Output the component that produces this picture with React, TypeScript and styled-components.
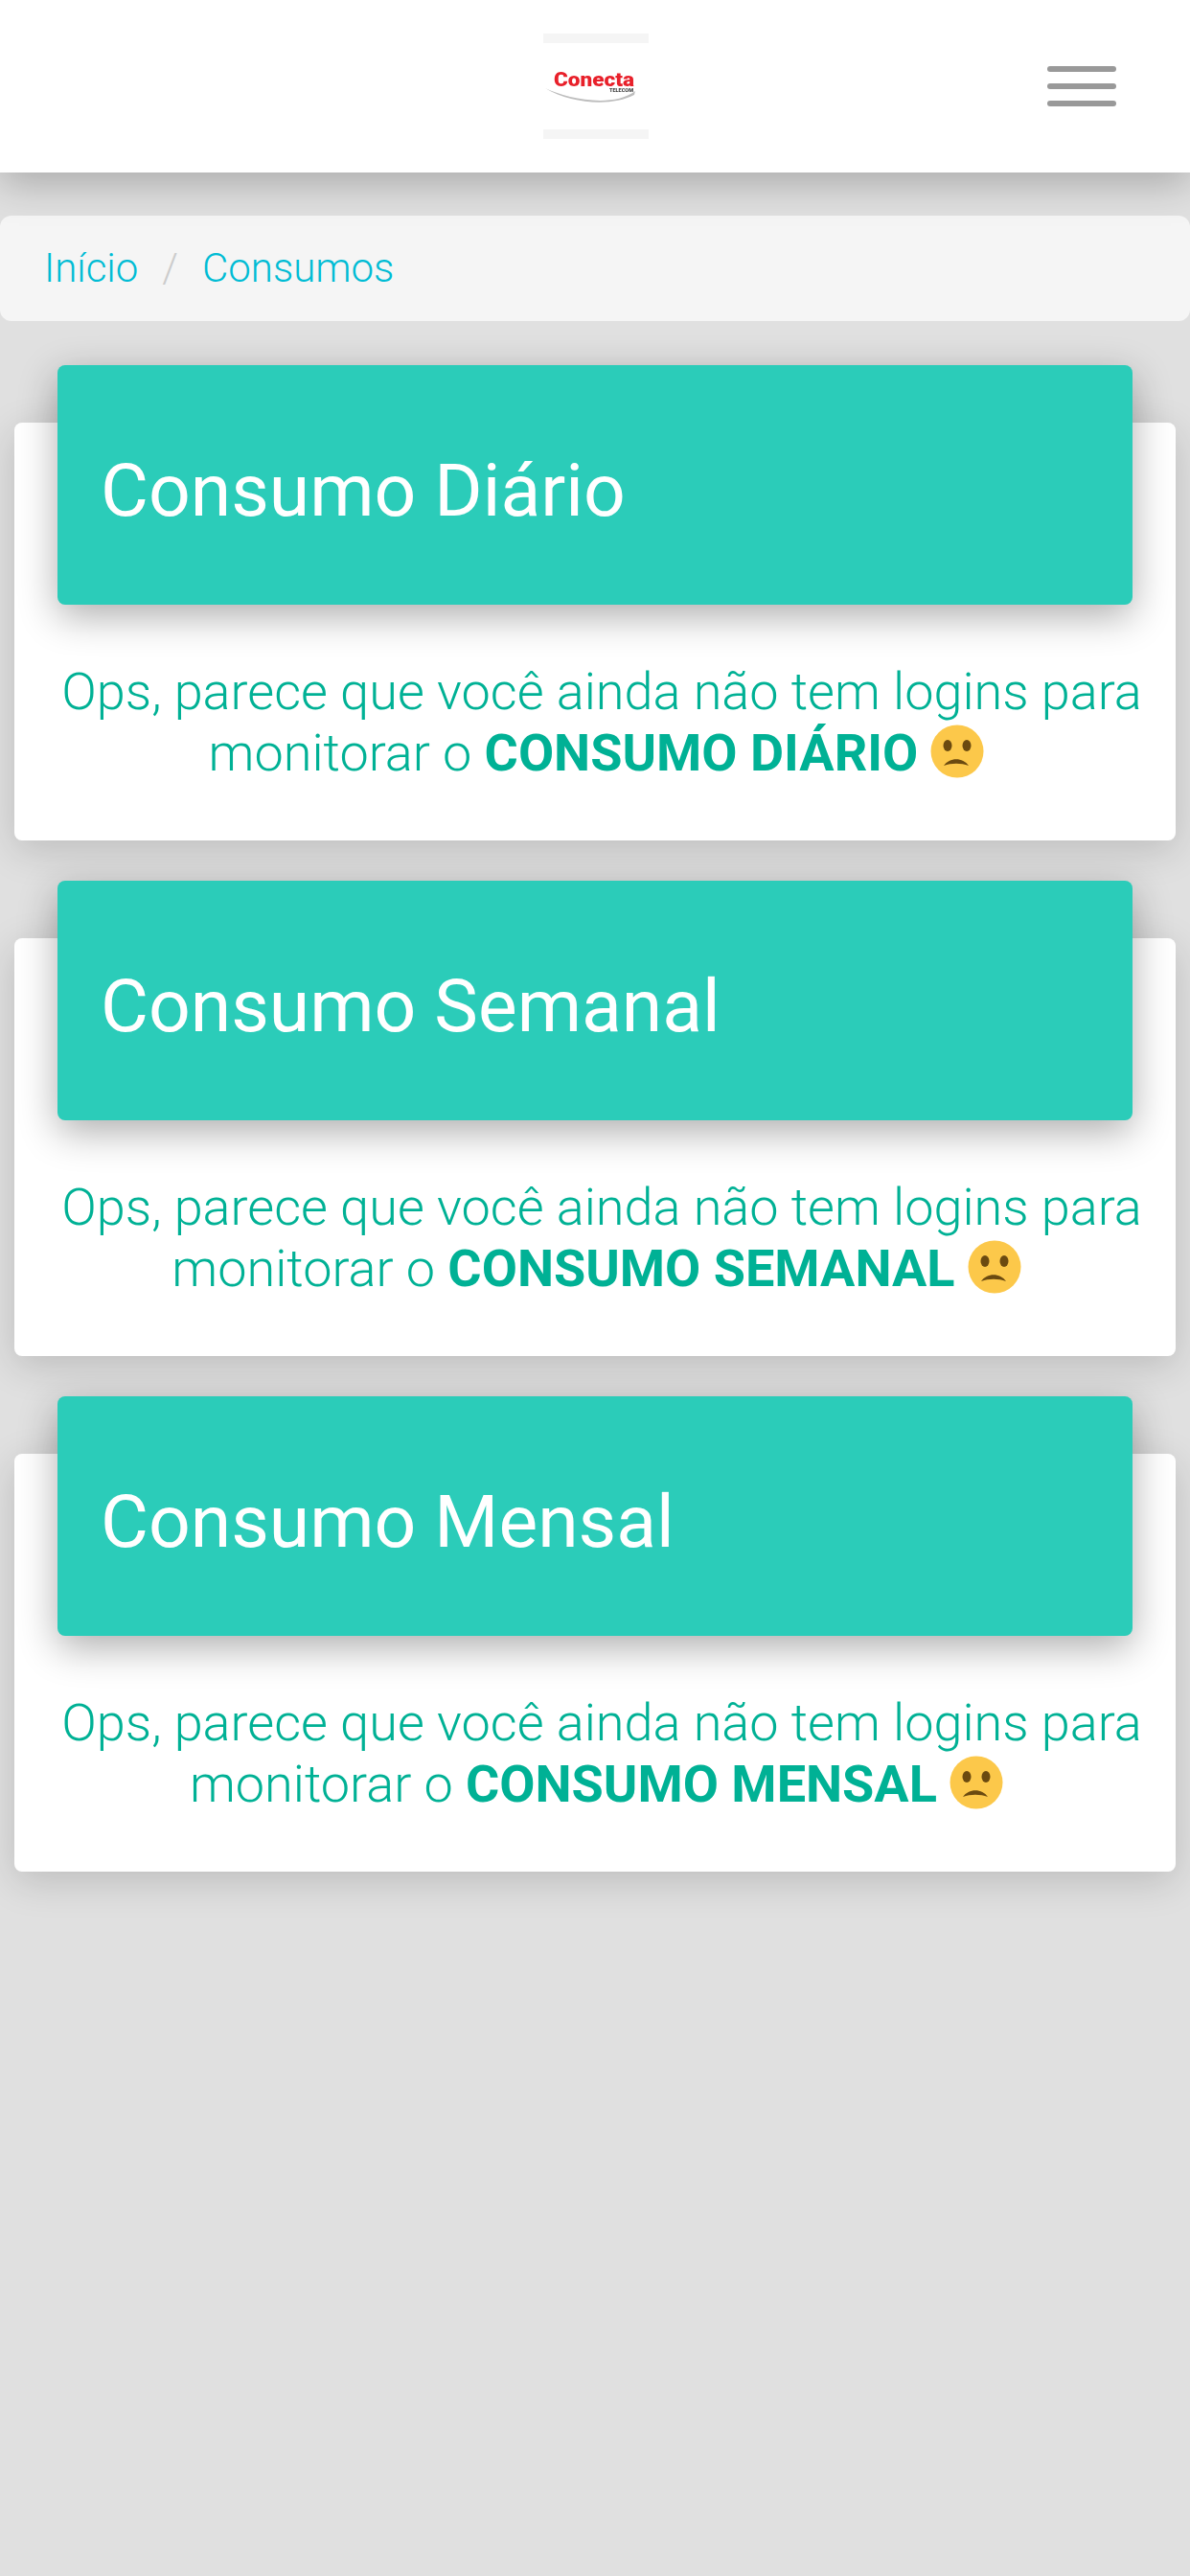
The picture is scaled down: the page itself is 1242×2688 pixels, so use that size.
import styled, { createGlobalStyle } from "styled-components";

const GlobalStyle = createGlobalStyle`
    html, body {
        margin: 0;
        padding: 0;
        background: #e0e0e0;
    }
    body {
        font-family: Roboto, "Liberation Sans", sans-serif;
        font-weight: 300;
    }
`

type ConsumoCardProps = {
    title: string
    label: string
}

const Logo = () => (
    <LogoBox>
        <svg width="110" height="90" viewBox="0 0 110 90">
            <text x="11" y="45" fontFamily="Roboto, sans-serif" fontWeight="900" fontSize="21" textLength="84" lengthAdjust="spacingAndGlyphs" fill="#e8202a">Conecta</text>
            <text x="69" y="50.5" fontFamily="Roboto, sans-serif" fontWeight="900" fontSize="5.5" textLength="25" lengthAdjust="spacingAndGlyphs" fill="#444444">TELECOM</text>
            <path d="M2 47 C 25 58, 72 68, 96 50 L 95 54 C 72 66, 30 64, 2 47 Z" fill="#bdbdbd" />
        </svg>
    </LogoBox>
)

const SadFace = () => (
    <Face width="56" height="56" viewBox="0 0 56 56">
        <circle cx="28" cy="28" r="27.5" fill="#fcc84a" />
        <ellipse cx="18" cy="22" rx="4.5" ry="6" fill="#6b4a10" />
        <ellipse cx="38" cy="22" rx="4.5" ry="6" fill="#6b4a10" />
        <path d="M14 43 C 20 34, 34 34, 40 43 C 32 40, 22 40, 14 43 Z" fill="#6b4a10" />
    </Face>
)

const ConsumoCard = (props: ConsumoCardProps) => {
    return (
        <Card>
            <CardHeader>{props.title}</CardHeader>
            <Message>
                Ops, parece que você ainda não tem logins para monitorar o <strong>{props.label}</strong> <SadFace />
            </Message>
        </Card>
    );
}

export default function App() {
    return (
        <Page>
            <GlobalStyle />
            <Navbar>
                <Logo />
                <Toggle>
                    <span />
                    <span />
                    <span />
                </Toggle>
            </Navbar>
            <Breadcrumb>
                <Crumb href="#">Início</Crumb>
                <Separator>/</Separator>
                <Crumb href="#">Consumos</Crumb>
            </Breadcrumb>
            <Cards>
                <ConsumoCard title="Consumo Diário" label="CONSUMO DIÁRIO" />
                <ConsumoCard title="Consumo Semanal" label="CONSUMO SEMANAL" />
                <ConsumoCard title="Consumo Mensal" label="CONSUMO MENSAL" />
            </Cards>
        </Page>
    );
}

const Page = styled.div`
    width: 1242px;
    min-height: 2688px;
    background: #e0e0e0;
    overflow: hidden;
`

const Navbar = styled.nav`
    position: relative;
    height: 180px;
    background: #ffffff;
    display: flex;
    align-items: center;
    justify-content: center;
    box-shadow: 0 10px 40px rgba(0, 0, 0, 0.26);
`

const LogoBox = styled.div`
    width: 110px;
    height: 110px;
    margin-left: 1px;
    box-sizing: border-box;
    border-top: 10px solid #f5f5f5;
    border-bottom: 10px solid #f5f5f5;
    svg {
        display: block;
        filter: blur(0.5px);
    }
`

const Toggle = styled.div`
    position: absolute;
    top: 69px;
    right: 77px;
    width: 72px;
    display: flex;
    flex-direction: column;
    gap: 12px;
    span {
        height: 6px;
        border-radius: 3px;
        background: #999999;
    }
`

const Breadcrumb = styled.div`
    margin-top: 45px;
    height: 110px;
    padding: 0 46px 2px;
    box-sizing: border-box;
    display: flex;
    align-items: center;
    background: #f5f5f5;
    border-radius: 12px;
    font-size: 42px;
`

const Crumb = styled.a`
    color: #00bcd4;
    text-decoration: none;
`

const Separator = styled.span`
    margin: 0 25px;
    color: #cccccc;
`

const Cards = styled.div`
    margin: 106px 15px 0;
    display: flex;
    flex-direction: column;
    gap: 102px;
`

const Card = styled.section`
    height: 436px;
    background: #ffffff;
    border-radius: 8px;
    box-shadow: 0 10px 40px rgba(0, 0, 0, 0.16);
`

const CardHeader = styled.h2`
    margin: -60px 45px 0;
    height: 250px;
    padding: 12px 45px 0;
    box-sizing: border-box;
    display: flex;
    align-items: center;
    background: #2bccb9;
    border-radius: 8px;
    color: #ffffff;
    font-size: 76.8px;
    font-weight: 400;
    box-shadow: 0 12px 40px rgba(0, 0, 0, 0.32);
`

const Message = styled.p`
    margin: 59px 15px 0 29px;
    text-align: center;
    color: #00b195;
    font-size: 54px;
    line-height: 63.5px;
    font-weight: 300;
    strong {
        font-weight: 700;
    }
`

const Face = styled.svg`
    vertical-align: -8px;
    margin-right: 11px;
`
